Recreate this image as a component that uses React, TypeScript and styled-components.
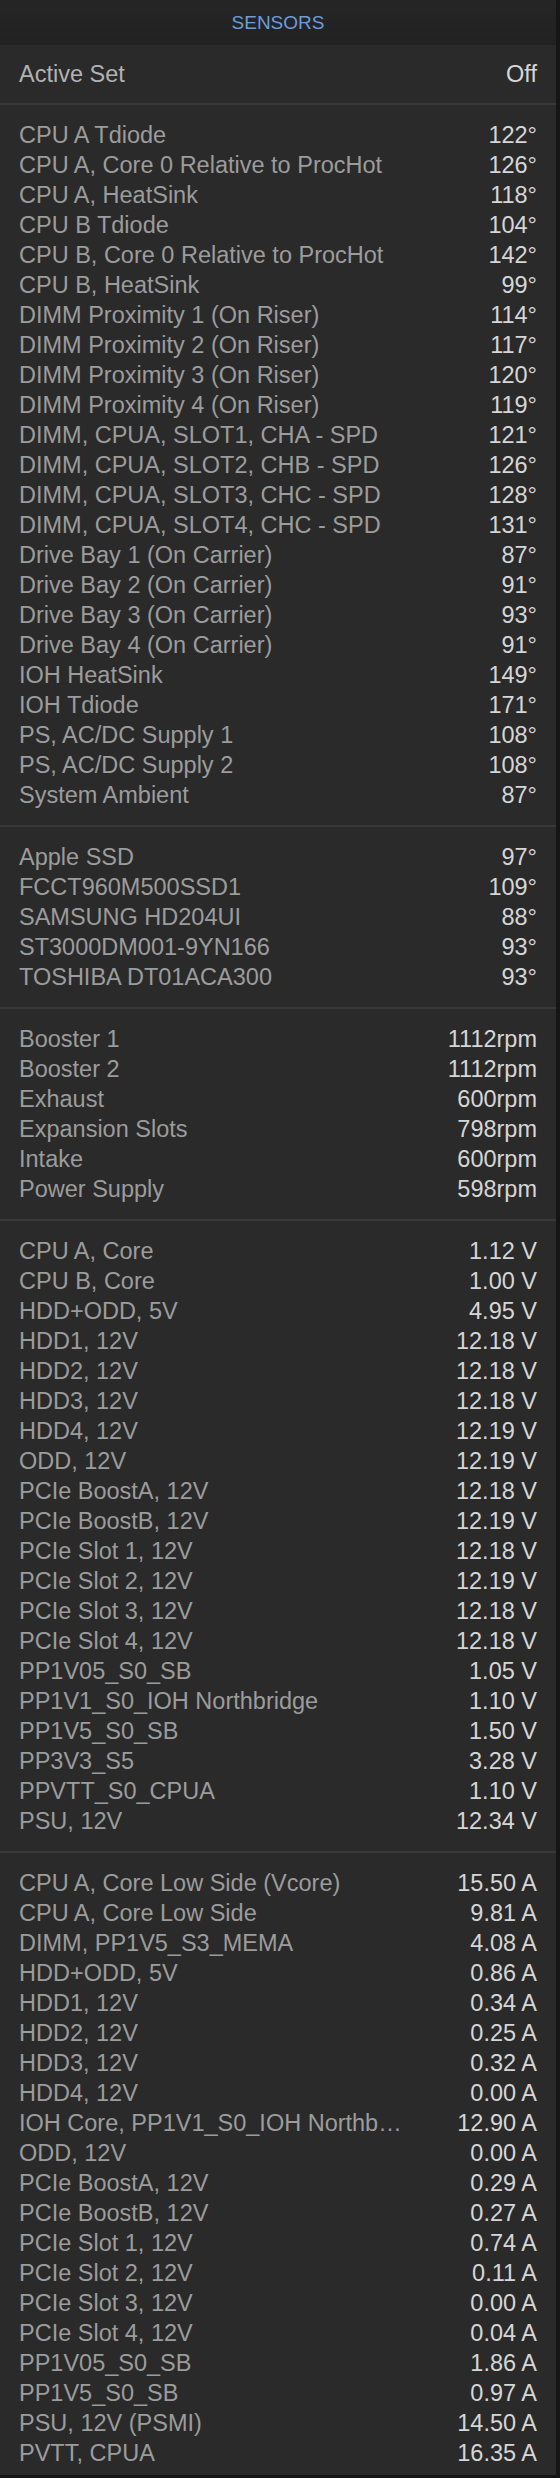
import styled, { createGlobalStyle } from "styled-components";

type Reading = [string, string];

const temperatures: Reading[] = [
  ["CPU A Tdiode", "122°"],
  ["CPU A, Core 0 Relative to ProcHot", "126°"],
  ["CPU A, HeatSink", "118°"],
  ["CPU B Tdiode", "104°"],
  ["CPU B, Core 0 Relative to ProcHot", "142°"],
  ["CPU B, HeatSink", "99°"],
  ["DIMM Proximity 1 (On Riser)", "114°"],
  ["DIMM Proximity 2 (On Riser)", "117°"],
  ["DIMM Proximity 3 (On Riser)", "120°"],
  ["DIMM Proximity 4 (On Riser)", "119°"],
  ["DIMM, CPUA, SLOT1, CHA - SPD", "121°"],
  ["DIMM, CPUA, SLOT2, CHB - SPD", "126°"],
  ["DIMM, CPUA, SLOT3, CHC - SPD", "128°"],
  ["DIMM, CPUA, SLOT4, CHC - SPD", "131°"],
  ["Drive Bay 1 (On Carrier)", "87°"],
  ["Drive Bay 2 (On Carrier)", "91°"],
  ["Drive Bay 3 (On Carrier)", "93°"],
  ["Drive Bay 4 (On Carrier)", "91°"],
  ["IOH HeatSink", "149°"],
  ["IOH Tdiode", "171°"],
  ["PS, AC/DC Supply 1", "108°"],
  ["PS, AC/DC Supply 2", "108°"],
  ["System Ambient", "87°"],
];

const drives: Reading[] = [
  ["Apple SSD", "97°"],
  ["FCCT960M500SSD1", "109°"],
  ["SAMSUNG HD204UI", "88°"],
  ["ST3000DM001-9YN166", "93°"],
  ["TOSHIBA DT01ACA300", "93°"],
];

const fans: Reading[] = [
  ["Booster 1", "1112rpm"],
  ["Booster 2", "1112rpm"],
  ["Exhaust", "600rpm"],
  ["Expansion Slots", "798rpm"],
  ["Intake", "600rpm"],
  ["Power Supply", "598rpm"],
];

const voltages: Reading[] = [
  ["CPU A, Core", "1.12 V"],
  ["CPU B, Core", "1.00 V"],
  ["HDD+ODD, 5V", "4.95 V"],
  ["HDD1, 12V", "12.18 V"],
  ["HDD2, 12V", "12.18 V"],
  ["HDD3, 12V", "12.18 V"],
  ["HDD4, 12V", "12.19 V"],
  ["ODD, 12V", "12.19 V"],
  ["PCIe BoostA, 12V", "12.18 V"],
  ["PCIe BoostB, 12V", "12.19 V"],
  ["PCIe Slot 1, 12V", "12.18 V"],
  ["PCIe Slot 2, 12V", "12.19 V"],
  ["PCIe Slot 3, 12V", "12.18 V"],
  ["PCIe Slot 4, 12V", "12.18 V"],
  ["PP1V05_S0_SB", "1.05 V"],
  ["PP1V1_S0_IOH Northbridge", "1.10 V"],
  ["PP1V5_S0_SB", "1.50 V"],
  ["PP3V3_S5", "3.28 V"],
  ["PPVTT_S0_CPUA", "1.10 V"],
  ["PSU, 12V", "12.34 V"],
];

const currents: Reading[] = [
  ["CPU A, Core Low Side (Vcore)", "15.50 A"],
  ["CPU A, Core Low Side", "9.81 A"],
  ["DIMM, PP1V5_S3_MEMA", "4.08 A"],
  ["HDD+ODD, 5V", "0.86 A"],
  ["HDD1, 12V", "0.34 A"],
  ["HDD2, 12V", "0.25 A"],
  ["HDD3, 12V", "0.32 A"],
  ["HDD4, 12V", "0.00 A"],
  ["IOH Core, PP1V1_S0_IOH Northbridge", "12.90 A"],
  ["ODD, 12V", "0.00 A"],
  ["PCIe BoostA, 12V", "0.29 A"],
  ["PCIe BoostB, 12V", "0.27 A"],
  ["PCIe Slot 1, 12V", "0.74 A"],
  ["PCIe Slot 2, 12V", "0.11 A"],
  ["PCIe Slot 3, 12V", "0.00 A"],
  ["PCIe Slot 4, 12V", "0.04 A"],
  ["PP1V05_S0_SB", "1.86 A"],
  ["PP1V5_S0_SB", "0.97 A"],
  ["PSU, 12V (PSMI)", "14.50 A"],
  ["PVTT, CPUA", "16.35 A"],
];

const groups = [temperatures, drives, fans, voltages, currents];

const App = () => {
  return (
    <>
      <GlobalStyle />
      <Panel>
        <Header>SENSORS</Header>
        <Section top>
          <Row>
            <Label bright>Active Set</Label>
            <Value>Off</Value>
          </Row>
        </Section>
        {groups.map((group, i) => (
          <Section key={i}>
            {group.map(([name, value], j) => (
              <Row key={j}>
                <Label>{name}</Label>
                <Value>{value}</Value>
              </Row>
            ))}
          </Section>
        ))}
      </Panel>
    </>
  );
};

export default App;

const GlobalStyle = createGlobalStyle`
  body {
    margin: 0;
    background: #161616;
  }
`;

const Panel = styled.div`
  width: 556px;
  height: 2475px;
  overflow: hidden;
  background: #2a2a2a;
  font-family: "Liberation Sans", Arial, sans-serif;
`;

const Header = styled.div`
  height: 45px;
  display: flex;
  align-items: center;
  justify-content: center;
  background: linear-gradient(#262626, #212121);
  color: #6b9ddb;
  font-size: 19px;
`;

// the first block sits right under the header, the rest are split by a rule
const Section = styled.div<{ top?: boolean }>`
  padding: ${(props) => (props.top ? "14px 19px" : "15px 19px")};
  border-top: ${(props) => (props.top ? "none" : "2px solid #393939")};
`;

const Row = styled.div`
  display: flex;
  align-items: center;
  height: 30px;
  line-height: 30px;
  font-size: 23.5px;
`;

const Label = styled.span<{ bright?: boolean }>`
  flex: 1;
  min-width: 0;
  overflow: hidden;
  white-space: nowrap;
  text-overflow: ellipsis;
  color: ${(props) => (props.bright ? "#b2b2b2" : "#9c9c9c")};
`;

const Value = styled.span`
  flex: none;
  margin-left: 52px;
  color: #d6d6d6;
`;
